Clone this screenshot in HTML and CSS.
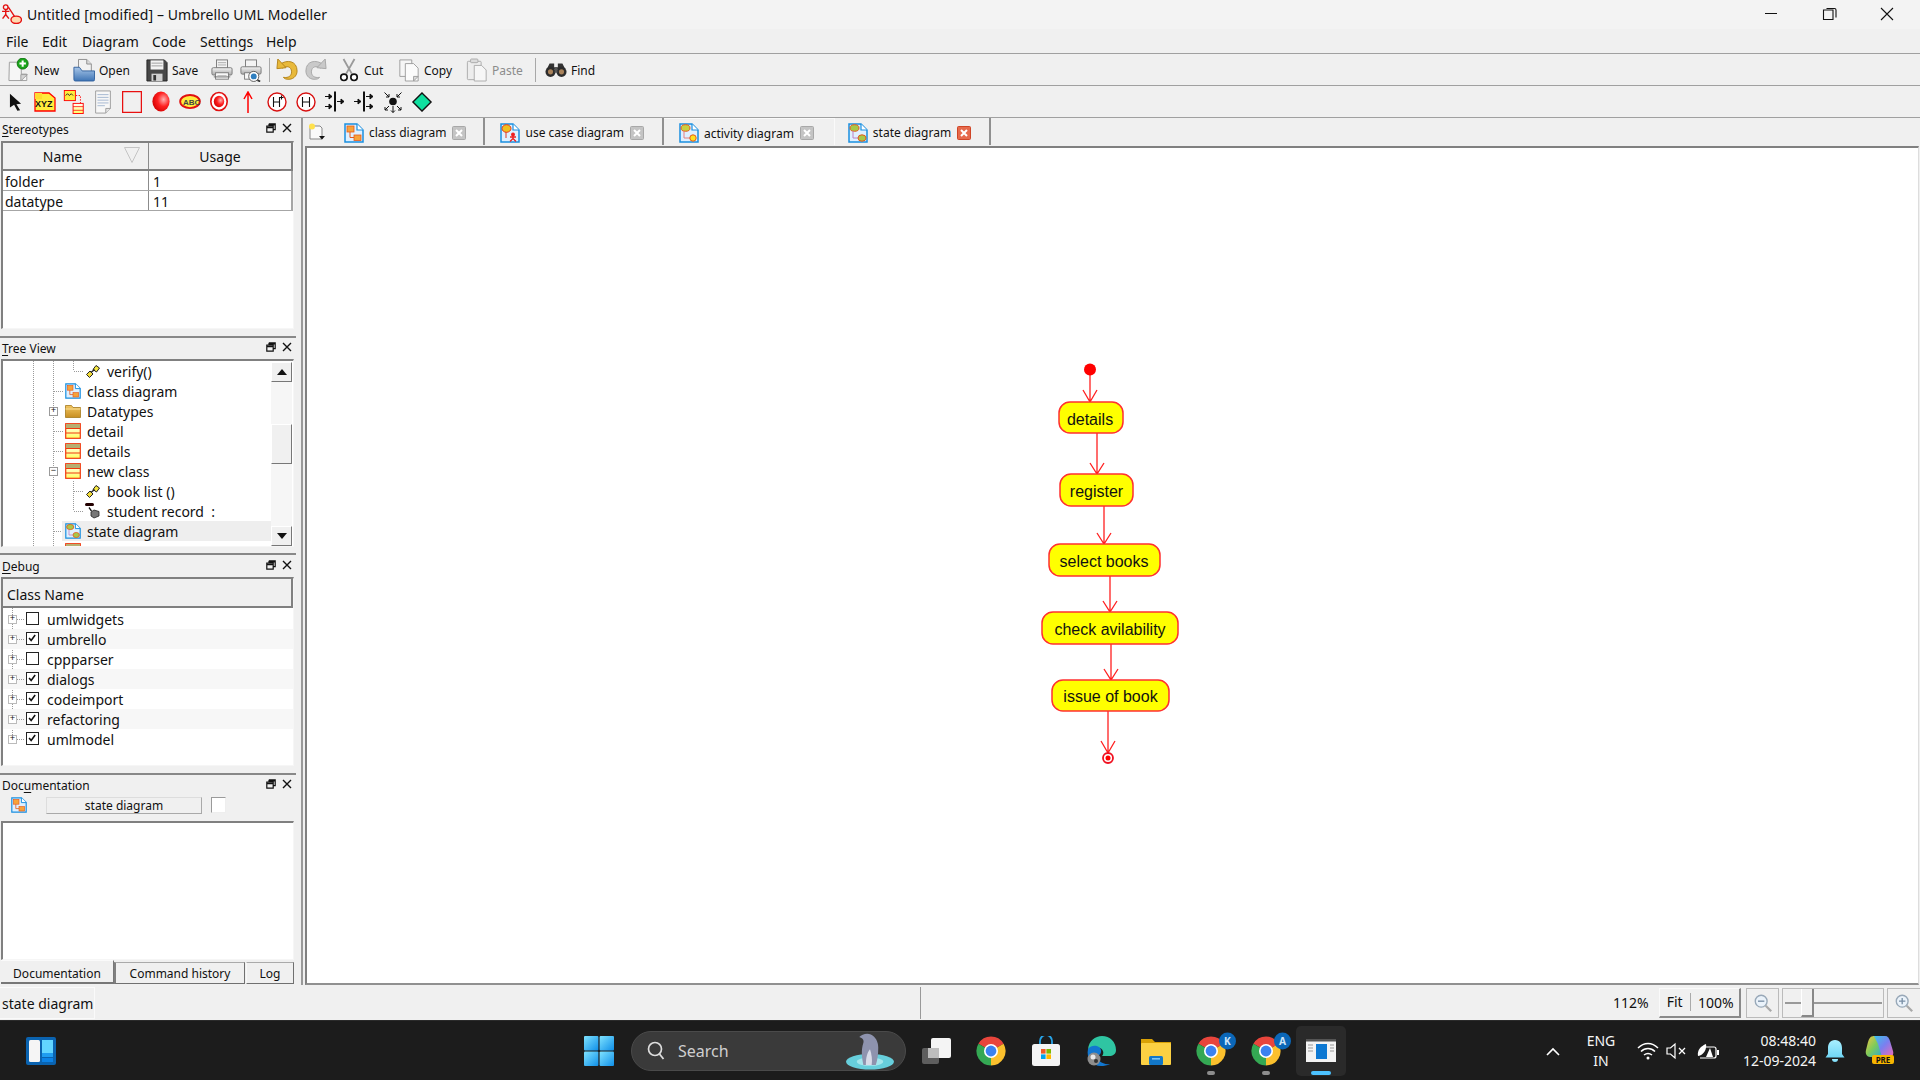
FILE: index.html
```html
<!DOCTYPE html>
<html lang="en">
<head>
<meta charset="utf-8">
<title>Untitled [modified] – Umbrello UML Modeller</title>
<link rel="stylesheet" href="styles.css">
</head>
<body>
<svg class="defs" aria-hidden="true">
  <defs>
    <linearGradient id="gFolder" x1="0" y1="0" x2="0" y2="1"><stop offset="0" stop-color="#f2c662"/><stop offset="1" stop-color="#c88f22"/></linearGradient>
    <linearGradient id="gBlue" x1="0" y1="0" x2="0" y2="1"><stop offset="0" stop-color="#a8c6e8"/><stop offset="1" stop-color="#3f75b5"/></linearGradient>
    <linearGradient id="gGrey" x1="0" y1="0" x2="0" y2="1"><stop offset="0" stop-color="#f4f4f4"/><stop offset="1" stop-color="#a9a9a9"/></linearGradient>
    <linearGradient id="gClass" x1="0" y1="0" x2="0" y2="1"><stop offset="0" stop-color="#fff"/><stop offset="1" stop-color="#ffff60"/></linearGradient>
    <radialGradient id="gRed" cx=".65" cy=".4" r=".7"><stop offset="0" stop-color="#ffb0b0"/><stop offset=".5" stop-color="#ff2020"/><stop offset="1" stop-color="#d00000"/></radialGradient>
    <linearGradient id="gBell" x1="0" y1="0" x2="0" y2="1"><stop offset="0" stop-color="#a9efff"/><stop offset="1" stop-color="#6fd6f5"/></linearGradient>
    <linearGradient id="gStart" x1="0" y1="0" x2="1" y2="1"><stop offset="0" stop-color="#7fe3ff"/><stop offset="1" stop-color="#0f8fe8"/></linearGradient>
    <linearGradient id="gCopilot" x1="0" y1="0" x2="1" y2="1"><stop offset="0" stop-color="#38c7e8"/><stop offset=".5" stop-color="#7a7ff0"/><stop offset="1" stop-color="#f06bb5"/></linearGradient>
    <linearGradient id="gCopilot2" x1="0" y1="0" x2="1" y2="1"><stop offset="0" stop-color="#f5c542"/><stop offset=".5" stop-color="#7ecb5a"/><stop offset="1" stop-color="#2aa7d8"/></linearGradient>

    <symbol id="dock-float" viewBox="0 0 10 10"><path d="M3 .8h6.2V6.600H7.400M.8 3.200h6.400V9.200H.8zM.8 4.600h6.400M3 .8v2.400M3 2h6" fill="none" stroke="#111" stroke-width="1.200"/></symbol>
    <symbol id="dock-close" viewBox="0 0 10 10"><path d="M1 1l8 8M9 1L1 9" stroke="#111" stroke-width="1.400"/></symbol>

    <symbol id="t-new" viewBox="0 0 24 26"><path d="M1.500 4.500h13v13l6 0v7h-19.500z" fill="#f6f6f6" stroke="#9a9a9a"/><path d="M14 25l7-7h-7z" fill="#d4d4d4" stroke="#9a9a9a"/><circle cx="16" cy="6" r="6" fill="#1aa51a" stroke="#0d700d"/><path d="M16 2.500v7M12.500 6h7" stroke="#fff" stroke-width="2.200"/></symbol>
    <symbol id="t-open" viewBox="0 0 24 26"><path d="M6 1.500h9l5 5v11H6z" fill="#f2f2f2" stroke="#8a8a8a"/><path d="M15 1.500v5h5" fill="#ddd" stroke="#8a8a8a"/><path d="M1 10h6l3 4h13.500v9.500a1.500 1.500 0 0 1-1.500 1.500H2.500A1.500 1.500 0 0 1 1 23.500z" fill="url(#gBlue)" stroke="#2f5f9c"/></symbol>
    <symbol id="t-save" viewBox="0 0 24 26"><path d="M1 2h19l3 3v20H1z" fill="#474747" stroke="#222"/><rect x="5" y="2.500" width="14" height="10" fill="#f3f3f3"/><path d="M6 5.500h12M6 8.500h12" stroke="#999"/><rect x="6" y="17" width="12" height="8" fill="#d0d0d0"/><rect x="8" y="18.500" width="3" height="6" fill="#333"/></symbol>
    <symbol id="t-print" viewBox="0 0 24 26"><rect x="6" y="2" width="12" height="9" fill="#f3f3f3" stroke="#777"/><path d="M7.500 5h9M7.500 7.500h9" stroke="#aaa"/><rect x="1" y="10.500" width="22" height="8" rx="1.500" fill="url(#gGrey)" stroke="#777"/><rect x="5" y="16" width="14" height="7" fill="#f8f8f8" stroke="#777"/><path d="M3 20.500h18" stroke="#666"/><path d="M7 19h10M7 21h10" stroke="#bbb"/></symbol>
    <symbol id="t-preview" viewBox="0 0 24 26"><rect x="6" y="2" width="12" height="8" fill="#f3f3f3" stroke="#777"/><rect x="1" y="9.500" width="22" height="8" rx="1.500" fill="url(#gGrey)" stroke="#777"/><rect x="5" y="16" width="12" height="7" fill="#f8f8f8" stroke="#777"/><circle cx="15" cy="20" r="5.500" fill="#fff" stroke="#555"/><circle cx="15" cy="20" r="3.200" fill="#2f7fc0"/><path d="M19 24l3 1.500" stroke="#333" stroke-width="2"/></symbol>
    <symbol id="t-undo" viewBox="0 0 24 26"><path d="M4 7c8-6 19-4 19 7 0 6-5 10-11 9-2 0-3-1-4-2 6 1 9-2 9-6 0-6-6-7-10-4z" fill="#e8b93b" stroke="#b18118" stroke-linejoin="round"/><path d="M2 1 1 11.500l10-1z" fill="#e8b93b" stroke="#b18118" stroke-linejoin="round"/></symbol>
    <symbol id="t-redo" viewBox="0 0 24 26"><path d="M20 7C12 1 1 3 1 14c0 6 5 10 11 9 2 0 3-1 4-2-6 1-9-2-9-6 0-6 6-7 10-4z" fill="#c9c9c9" stroke="#a5a5a5" stroke-linejoin="round"/><path d="M22 1l1 10.500-10-1z" fill="#c9c9c9" stroke="#a5a5a5" stroke-linejoin="round"/></symbol>
    <symbol id="t-cut" viewBox="0 0 24 26"><path d="M6 1l9 16M18 1L9 17" stroke="#9a9a9a" stroke-width="2" fill="none"/><circle cx="6.500" cy="21" r="3.500" fill="#fff" stroke="#111" stroke-width="1.800"/><circle cx="17.500" cy="21" r="3.500" fill="#fff" stroke="#111" stroke-width="1.800"/></symbol>
    <symbol id="t-copy" viewBox="0 0 24 26"><path d="M2 2h13v18H2z" fill="#f6f6f6" stroke="#9a9a9a"/><path d="M8 6h9l5 5v14H8z" fill="#fbfbfb" stroke="#9a9a9a"/><path d="M17 25l5-5h-5z" fill="#ddd" stroke="#9a9a9a"/></symbol>
    <symbol id="t-paste" viewBox="0 0 24 26"><rect x="1.500" y="3.500" width="15" height="20" rx="1" fill="#ededed" stroke="#a8a8a8"/><rect x="5" y="1" width="8" height="4" rx="1" fill="#dcdcdc" stroke="#a8a8a8"/><path d="M9 8h8l5 5v12H9z" fill="#f6f6f6" stroke="#a8a8a8"/></symbol>
    <symbol id="t-find" viewBox="0 0 24 22"><path d="M2 10l3-6h5v4h4V4h5l3 6z" fill="#333"/><circle cx="6" cy="13" r="5.500" fill="#2c2c2c"/><circle cx="18" cy="13" r="5.500" fill="#2c2c2c"/><circle cx="6" cy="13" r="2.800" fill="#a9825a"/><circle cx="18" cy="13" r="2.800" fill="#a9825a"/><rect x="10.500" y="8" width="3" height="6" fill="#555"/></symbol>

    <symbol id="u-cursor" viewBox="0 0 14 20"><path d="M1 1l12 11-5 .5 4 6.500-3 .5-3.500-6.500L1 16z" fill="#111"/></symbol>
    <symbol id="u-xyz" viewBox="0 0 22 20"><path d="M1 1h14l6 5v13H1z" fill="#ffec3d" stroke="#f00" stroke-width="1.300"/><path d="M1 1h7v6h-7z" fill="#ffdc30"/></symbol>
    <symbol id="u-assoc" viewBox="0 0 22 26"><rect x=".5" y=".5" width="12" height="11" fill="#ffec3d" stroke="#f00"/><rect x="10" y="14.500" width="11" height="11" fill="url(#gClass)" stroke="#f00"/><path d="M10 18h11M10 22h11" stroke="#f00" stroke-width=".8"/><path d="M13 6h5v8" fill="none" stroke="#f00" stroke-dasharray="1.500 1.500"/><path d="M2 6l2-2 2 2 2-2 2 2" fill="none" stroke="#222"/></symbol>
    <symbol id="u-note" viewBox="0 0 18 26"><path d="M1 1h16v19l-5 5H1z" fill="#f7f7f7" stroke="#9b9b9b"/><path d="M12 25v-5h5" fill="#e3e3e3" stroke="#9b9b9b"/><path d="M3 5h12M3 8h12M3 11h12M3 14h12M3 17h8" stroke="#8da6c6" stroke-width=".8"/></symbol>
    <symbol id="u-rect" viewBox="0 0 20 22"><rect x=".6" y=".6" width="18.800" height="20.800" fill="none" stroke="#e81010" stroke-width="1.300"/></symbol>
    <symbol id="u-initial" viewBox="0 0 18 22"><ellipse cx="9" cy="11" rx="9" ry="10.500" fill="url(#gRed)"/></symbol>
    <symbol id="u-abc" viewBox="0 0 22 16"><ellipse cx="11" cy="8" rx="10.500" ry="7" fill="#ffec3d" stroke="#e01010" stroke-width="2"/></symbol>
    <symbol id="u-final" viewBox="0 0 18 20"><ellipse cx="9" cy="10" rx="8.200" ry="9" fill="#fff" stroke="#e01010" stroke-width="1.600"/><ellipse cx="9" cy="10" rx="5.200" ry="5.800" fill="url(#gRed)"/></symbol>
    <symbol id="u-arrow" viewBox="0 0 10 22"><path d="M5 22V2M1 8l4-7 4 7" fill="none" stroke="#f00" stroke-width="1.500"/></symbol>
    <symbol id="u-hstar" viewBox="0 0 20 20"><ellipse cx="10" cy="10" rx="9" ry="9" fill="#fff" stroke="#d81010" stroke-width="1.400"/><path d="M6.500 5v10M12.500 5v10M6.500 10h6M14.500 3.500v4M12.500 5.500h4" stroke="#111" stroke-width="1.100" fill="none"/></symbol>
    <symbol id="u-h" viewBox="0 0 20 20"><ellipse cx="10" cy="10" rx="9" ry="9" fill="#fff" stroke="#d81010" stroke-width="1.400"/><path d="M6.500 5v10M13.500 5v10M6.500 10h7" stroke="#111" stroke-width="1.100" fill="none"/></symbol>
    <symbol id="u-fork" viewBox="0 0 22 20"><rect x="10" y="0" width="2" height="20" fill="#111"/><path d="M1 5h7M5 2.500 8 5 5 7.500zM1 15h7M5 12.500 8 15 5 17.500zM13 10h7M17 7.500 20 10l-3 2.500z" stroke="#111" fill="#111"/></symbol>
    <symbol id="u-join" viewBox="0 0 22 20"><rect x="10" y="0" width="2" height="20" fill="#111"/><path d="M1 10h7M5 7.500 8 10l-3 2.500zM13 5h7M17 2.500 20 5l-3 2.500zM13 15h7M17 12.500 20 15l-3 2.500z" stroke="#111" fill="#111"/></symbol>
    <symbol id="u-burst" viewBox="0 0 20 22"><circle cx="10" cy="10.500" r="3.800" fill="#111"/><path d="M1.500 1.500 6 6M6 3v3H3M18.500 1.500 14 6M14 3v3h3M6 15l-4 4M2 16v3h3M14 15l4 4M18 16v3h-3M10 15v6.500M8 19.500l2 2 2-2" fill="none" stroke="#111"/></symbol>
    <symbol id="u-diamond" viewBox="0 0 22 22"><path d="M11 1l10 10-10 10L1 11z" fill="#10e0a0" stroke="#111" stroke-width="1.500"/></symbol>

    <symbol id="d-base" viewBox="0 0 20 20"><path d="M1 1h12l6 6v12H1z" fill="#dff0ff" stroke="#1a8fe0" stroke-width="1.500"/><path d="M13 1v6h6" fill="#fff" stroke="#1a8fe0" stroke-width="1.200"/></symbol>
    <symbol id="d-class" viewBox="0 0 20 20"><use href="#d-base"/><rect x="3" y="3" width="7" height="6" fill="#f6a33a" stroke="#e5591d" stroke-width=".8"/><rect x="10" y="12" width="7" height="5.500" fill="#f6a33a" stroke="#e5591d" stroke-width=".8"/><path d="M6 9v5.500h4" fill="none" stroke="#e5591d"/></symbol>
    <symbol id="d-usecase" viewBox="0 0 20 20"><use href="#d-base"/><ellipse cx="6.500" cy="5.500" rx="4.500" ry="3.800" fill="#f0c020" stroke="#e5391d"/><path d="M6 9v6" stroke="#e5391d"/><circle cx="13" cy="11.500" r="2" fill="#ee2020"/><path d="M13 13v3M10 14h6M13 15.500l-3 3M13 15.500l3 3" stroke="#ee2020" stroke-width="1.300"/></symbol>
    <symbol id="d-activity" viewBox="0 0 20 20"><use href="#d-base"/><ellipse cx="6.500" cy="5" rx="4.500" ry="3.300" fill="#c9d040" stroke="#e5591d"/><path d="M5 8v7h6" fill="none" stroke="#e58080"/><circle cx="14" cy="15" r="3.200" fill="#ffe020" stroke="#e5591d"/></symbol>
    <symbol id="d-state" viewBox="0 0 20 20"><use href="#d-base"/><ellipse cx="6.500" cy="5" rx="4.500" ry="3.300" fill="#a8c848" stroke="#e5591d"/><path d="M5 8v7h5" fill="none" stroke="#c080c0"/><ellipse cx="14" cy="15" rx="4" ry="3.200" fill="#a8c848" stroke="#e5591d"/></symbol>
    <symbol id="x-btn" viewBox="0 0 14 14"><rect x=".5" y=".5" width="13" height="13" rx="1" fill="#c4c4c4" stroke="#a8a8a8"/><path d="M4 4l6 6M10 4l-6 6" stroke="#fff" stroke-width="2"/></symbol>
    <symbol id="x-btn-on" viewBox="0 0 14 14"><rect x=".5" y=".5" width="13" height="13" rx="1" fill="#e66a4c" stroke="#cf4526"/><path d="M4 4l6 6M10 4l-6 6" stroke="#fff" stroke-width="2"/></symbol>
    <symbol id="new-tab" viewBox="0 0 18 18"><path d="M2 3h10l2 2v11H2z" fill="#fafafa" stroke="#888"/><circle cx="4" cy="3.500" r="3" fill="#ffe14d"/><path d="M11 13h6l-3 3.500z" fill="#111"/></symbol>

    <symbol id="n-key" viewBox="0 0 16 16"><path d="M4.500 14.500 1.500 11.500 5 8l3 3z" fill="#f2dc3a" stroke="#222"/><path d="M8 6.500 11 2.500l3.500 2.500-3 4z" fill="#f7e83f" stroke="#222"/><path d="M6 9.500l3.500-3" stroke="#222" stroke-width="1.500"/></symbol>
    <symbol id="n-folder" viewBox="0 0 16 16"><path d="M.5 2.500h6l1.500 2h7.500v10H.5z" fill="url(#gFolder)" stroke="#a57a1d" stroke-width=".8"/><path d="M.5 6h15" stroke="#f9e09a"/></symbol>
    <symbol id="n-class" viewBox="0 0 16 16"><rect x=".7" y=".7" width="14.600" height="14.600" fill="url(#gClass)" stroke="#f03a10" stroke-width="1.200"/><rect x="1" y="1" width="14" height="4.500" fill="#b8ae70"/><path d="M1 5.500h14M1 10h14" stroke="#f03a10"/></symbol>
    <symbol id="n-attr" viewBox="0 0 16 16"><rect x="0" y="0" width="9" height="3" rx="1.500" fill="#200"/><path d="M4 4.500l2.500 3.500" stroke="#111" stroke-width="1.300"/><path d="M9 7l5 1.500v4.500l-5 2-3-2V9z" fill="#777" stroke="#222" stroke-width=".8"/></symbol>
    <symbol id="check" viewBox="0 0 12 12"><path d="M2.500 6 5 9l4.800-6.500" fill="none" stroke="#111" stroke-width="1.900"/></symbol>
    <symbol id="zoom-out" viewBox="0 0 22 22"><circle cx="9" cy="9" r="6.500" fill="#eaf2fa" stroke="#98a8b8" stroke-width="1.500"/><path d="M5.500 9h7" stroke="#7a8fa5" stroke-width="1.500"/><path d="M14 14l6 6" stroke="#a9a9a9" stroke-width="2.500"/></symbol>
    <symbol id="zoom-in" viewBox="0 0 22 22"><circle cx="9" cy="9" r="6.500" fill="#eaf2fa" stroke="#98a8b8" stroke-width="1.500"/><path d="M5.500 9h7M9 5.500v7" stroke="#7a8fa5" stroke-width="1.500"/><path d="M14 14l6 6" stroke="#a9a9a9" stroke-width="2.500"/></symbol>

    <symbol id="chrome" viewBox="0 0 30 30"><path d="M15 15 2.440 7.750A14.500 14.500 0 0 1 27.560 7.750z" fill="#e8453c"/><path d="M15 15 27.560 7.750A14.500 14.500 0 0 1 15 29.500z" fill="#fbc02d"/><path d="M15 15V29.500A14.500 14.500 0 0 1 2.440 7.750z" fill="#34a853"/><circle cx="15" cy="15" r="7" fill="#fff"/><circle cx="15" cy="15" r="5.400" fill="#3b82f0"/></symbol>
  </defs>
</svg>

<div class="window">
  <header class="titlebar">
    <svg class="app-logo" viewBox="0 0 20 20"><circle cx="4.500" cy="3" r="2.200" fill="none" stroke="#e41010" stroke-width="1.300"/><path d="M4.500 5v5M1 7h7M4.500 10l-3 4M4.500 10l3 4M7 3l6 9" stroke="#e41010" stroke-width="1.300" fill="none"/><ellipse cx="14.500" cy="15" rx="5" ry="3.500" fill="#ffd9b0" stroke="#e41010" stroke-width="1.300"/></svg>
    <span class="title-text">Untitled [modified] – Umbrello UML Modeller</span>
    <div class="win-controls">
      <svg class="win-btn" viewBox="0 0 58 24"><path d="M23 11h12" stroke="#111"/></svg>
      <svg class="win-btn" viewBox="0 0 58 24"><path d="M24.500 7.500h8.500v9.500h-9.500V7.500zM26.500 6h8q1.500 0 1.500 1.500V15" fill="none" stroke="#111" stroke-width="1.100"/></svg>
      <svg class="win-btn" viewBox="0 0 58 24"><path d="M23 5.500l12 12M35 5.500 23 17.500" stroke="#111" stroke-width="1.100"/></svg>
    </div>
  </header>

  <nav class="menubar">
    <span class="menu-item">File</span><span class="menu-item">Edit</span><span class="menu-item">Diagram</span><span class="menu-item">Code</span><span class="menu-item">Settings</span><span class="menu-item">Help</span>
  </nav>

  <div class="toolbar">
    <div class="tool w-new"><svg class="tool-icon"><use href="#t-new"/></svg><span>New</span></div>
    <div class="tool w-open"><svg class="tool-icon"><use href="#t-open"/></svg><span>Open</span></div>
    <div class="tool w-save"><svg class="tool-icon"><use href="#t-save"/></svg><span>Save</span></div>
    <div class="tool w-ico"><svg class="tool-icon"><use href="#t-print"/></svg></div>
    <div class="tool w-ico"><svg class="tool-icon"><use href="#t-preview"/></svg></div>
    <div class="tool-sep"></div>
    <div class="tool w-ico"><svg class="tool-icon"><use href="#t-undo"/></svg></div>
    <div class="tool w-redo"><svg class="tool-icon"><use href="#t-redo"/></svg></div>
    <div class="tool w-cut"><svg class="tool-icon"><use href="#t-cut"/></svg><span>Cut</span></div>
    <div class="tool w-copy"><svg class="tool-icon"><use href="#t-copy"/></svg><span>Copy</span></div>
    <div class="tool w-paste"><svg class="tool-icon"><use href="#t-paste"/></svg><span class="disabled">Paste</span></div>
    <div class="tool-sep sep-b"></div>
    <div class="tool"><svg class="tool-icon"><use href="#t-find"/></svg><span>Find</span></div>
  </div>

  <div class="toolbar uml">
    <div class="uml-tool"><svg class="u-14"><use href="#u-cursor"/></svg></div>
    <div class="uml-tool"><svg class="u-22"><use href="#u-xyz"/></svg><span class="xyz">XYZ</span></div>
    <div class="uml-tool"><svg class="u-22 u-tall"><use href="#u-assoc"/></svg></div>
    <div class="uml-tool"><svg class="u-18"><use href="#u-note"/></svg></div>
    <div class="uml-tool"><svg class="u-20"><use href="#u-rect"/></svg></div>
    <div class="uml-tool"><svg class="u-18 u-mid"><use href="#u-initial"/></svg></div>
    <div class="uml-tool"><svg class="u-22 u-flat"><use href="#u-abc"/></svg><span class="abc">ABC</span></div>
    <div class="uml-tool"><svg class="u-18 u-mid"><use href="#u-final"/></svg></div>
    <div class="uml-tool"><svg class="u-10"><use href="#u-arrow"/></svg></div>
    <div class="uml-tool"><svg class="u-20"><use href="#u-hstar"/></svg></div>
    <div class="uml-tool"><svg class="u-20"><use href="#u-h"/></svg></div>
    <div class="uml-tool"><svg class="u-22 u-mid"><use href="#u-fork"/></svg></div>
    <div class="uml-tool"><svg class="u-22 u-mid"><use href="#u-join"/></svg></div>
    <div class="uml-tool"><svg class="u-20"><use href="#u-burst"/></svg></div>
    <div class="uml-tool"><svg class="u-22"><use href="#u-diamond"/></svg></div>
  </div>

  <main class="workspace">
    <aside class="docks">
      <section class="dock dock-stereo">
        <div class="dock-title"><span><u>S</u>tereotypes</span><svg class="dock-ctl"><use href="#dock-float"/></svg><svg class="dock-ctl"><use href="#dock-close"/></svg></div>
        <div class="dock-body">
          <div class="grid-head"><div class="head-cell name-col">Name<svg class="sort-mark" viewBox="0 0 16 16"><path d="M.5 .5h15L8 15.500z" fill="none" stroke="#c4c4c4"/></svg></div><div class="head-cell usage-col">Usage</div></div>
          <div class="grid-row"><div class="cell name-col">folder</div><div class="cell usage-col">1</div></div>
          <div class="grid-row"><div class="cell name-col">datatype</div><div class="cell usage-col">11</div></div>
        </div>
      </section>

      <section class="dock dock-tree">
        <div class="dock-title tree-title"><span><u>T</u>ree View</span><svg class="dock-ctl"><use href="#dock-float"/></svg><svg class="dock-ctl"><use href="#dock-close"/></svg></div>
        <div class="dock-body tree-body">
          <div class="tree">
            <div class="tree-row lvl3 branch-end"><svg class="node-icon"><use href="#n-key"/></svg><span>verify()</span></div>
            <div class="tree-row lvl2 stub"><svg class="node-icon"><use href="#d-class"/></svg><span>class diagram</span></div>
            <div class="tree-row lvl2x"><span class="expander">+</span><svg class="node-icon"><use href="#n-folder"/></svg><span>Datatypes</span></div>
            <div class="tree-row lvl2 stub"><svg class="node-icon"><use href="#n-class"/></svg><span>detail</span></div>
            <div class="tree-row lvl2 stub"><svg class="node-icon"><use href="#n-class"/></svg><span>details</span></div>
            <div class="tree-row lvl2x"><span class="expander">−</span><svg class="node-icon"><use href="#n-class"/></svg><span>new class</span></div>
            <div class="tree-row lvl3 branch"><svg class="node-icon"><use href="#n-key"/></svg><span>book list ()</span></div>
            <div class="tree-row lvl3 branch-end"><svg class="node-icon"><use href="#n-attr"/></svg><span>student record&nbsp; :</span></div>
            <div class="tree-row lvl2 selected"><svg class="node-icon"><use href="#d-state"/></svg><span>state diagram</span></div>
            <div class="tree-row lvl2 stub"><svg class="node-icon"><use href="#n-class"/></svg></div>
          </div>
          <div class="scrollbar">
            <div class="sb-btn"><svg viewBox="0 0 10 6" class="sb-arrow"><path d="M5 0l5 6H0z" fill="#111"/></svg></div>
            <div class="sb-track"><div class="sb-thumb"></div></div>
            <div class="sb-btn"><svg viewBox="0 0 10 6" class="sb-arrow"><path d="M5 6 0 0h10z" fill="#111"/></svg></div>
          </div>
        </div>
      </section>

      <section class="dock dock-debug">
        <div class="dock-title debug-title"><span><u>D</u>ebug</span><svg class="dock-ctl"><use href="#dock-float"/></svg><svg class="dock-ctl"><use href="#dock-close"/></svg></div>
        <div class="dock-body">
          <div class="debug-head">Class Name</div>
          <div class="debug-list">
            <div class="debug-row"><span class="expander">+</span><span class="checkbox"></span><span>umlwidgets</span></div>
            <div class="debug-row alt"><span class="expander">+</span><span class="checkbox"><svg><use href="#check"/></svg></span><span>umbrello</span></div>
            <div class="debug-row"><span class="expander">+</span><span class="checkbox"></span><span>cppparser</span></div>
            <div class="debug-row alt"><span class="expander">+</span><span class="checkbox"><svg><use href="#check"/></svg></span><span>dialogs</span></div>
            <div class="debug-row"><span class="expander">+</span><span class="checkbox"><svg><use href="#check"/></svg></span><span>codeimport</span></div>
            <div class="debug-row alt"><span class="expander">+</span><span class="checkbox"><svg><use href="#check"/></svg></span><span>refactoring</span></div>
            <div class="debug-row"><span class="expander">+</span><span class="checkbox"><svg><use href="#check"/></svg></span><span>umlmodel</span></div>
          </div>
        </div>
      </section>

      <section class="dock dock-doc">
        <div class="dock-title doc-title"><span>Doc<u>u</u>mentation</span><svg class="dock-ctl"><use href="#dock-float"/></svg><svg class="dock-ctl"><use href="#dock-close"/></svg></div>
        <div class="doc-head"><svg class="doc-icon"><use href="#d-class"/></svg><div class="doc-name">state diagram</div><div class="doc-check"></div></div>
        <div class="doc-text"></div>
        <div class="doc-tabs"><div class="doc-tab active">Documentation</div><div class="doc-tab w-hist">Command history</div><div class="doc-tab w-log">Log</div></div>
      </section>
    </aside>

    <section class="editor">
      <div class="tabs">
        <svg class="new-tab"><use href="#new-tab"/></svg>
        <div class="tab tab-first"><svg class="tab-icon"><use href="#d-class"/></svg><span>class diagram</span><svg class="tab-x"><use href="#x-btn"/></svg></div>
        <div class="tab"><svg class="tab-icon"><use href="#d-usecase"/></svg><span>use case diagram</span><svg class="tab-x"><use href="#x-btn"/></svg></div>
        <div class="tab tab-before-active"><svg class="tab-icon"><use href="#d-activity"/></svg><span>activity diagram</span><svg class="tab-x"><use href="#x-btn"/></svg></div>
        <div class="tab tab-active"><svg class="tab-icon"><use href="#d-state"/></svg><span>state diagram</span><svg class="tab-x"><use href="#x-btn-on"/></svg></div>
      </div>
      <div class="canvas">
        <svg class="diagram" viewBox="307 148 1610 835">
          <g class="edges">
            <path d="M1090 369V402M1083 390l7 12 7-12"/>
            <path d="M1097 433V474M1090 463l7 11 7-11"/>
            <path d="M1104 506V544M1097 533l7 11 7-11"/>
            <path d="M1110 576V612M1103 601l7 11 7-11"/>
            <path d="M1111 644V680M1104 669l7 11 7-11"/>
            <path d="M1108 711V753M1101 741l7 12 7-12"/>
          </g>
          <circle class="start" cx="1090" cy="369.500" r="6"/>
          <g class="states">
            <rect x="1059" y="402" width="64" height="31" rx="11"/>
            <rect x="1060" y="474" width="73" height="32" rx="11"/>
            <rect x="1049" y="544" width="111" height="32" rx="11"/>
            <rect x="1042" y="612" width="136" height="32" rx="11"/>
            <rect x="1052" y="680" width="117" height="31" rx="11"/>
          </g>
          <g class="labels">
            <text x="1090" y="424.500">details</text>
            <text x="1096.500" y="497">register</text>
            <text x="1104" y="566.500">select books</text>
            <text x="1110" y="635">check avilability</text>
            <text x="1110.500" y="702">issue of book</text>
          </g>
          <circle class="end-ring" cx="1108" cy="758" r="5"/>
          <circle class="start" cx="1108" cy="758" r="2.500"/>
        </svg>
      </div>
    </section>
  </main>

  <div class="statusbar">
    <div class="status-label">state diagram</div>
    <div class="status-right">
      <span class="zoom-pct">112%</span>
      <div class="zoom-btns"><span class="zb-fit">Fit</span><span class="zb-100">100%</span></div>
      <div class="zoom-box"><svg class="zoom-glass"><use href="#zoom-out"/></svg></div>
      <div class="zoom-slider"><div class="slider-handle"></div></div>
      <div class="zoom-box zoom-last"><svg class="zoom-glass"><use href="#zoom-in"/></svg></div>
    </div>
  </div>

  <footer class="taskbar">
    <svg class="widgets" viewBox="0 0 30 28"><rect width="30" height="28" rx="2" fill="#0a63b0"/><rect x="3" y="3" width="11" height="22" rx="1.500" fill="#f5f5f5"/><rect x="16" y="3" width="11" height="13" fill="#62d5ff"/><rect x="16" y="16" width="11" height="4" fill="#1f9cf0"/><rect x="16" y="21" width="11" height="4" fill="#0b82e6"/></svg>
    <svg class="start-btn" viewBox="0 0 30 30"><rect width="14.400" height="14.400" rx="1" fill="url(#gStart)"/><rect x="15.600" width="14.400" height="14.400" rx="1" fill="url(#gStart)"/><rect y="15.600" width="14.400" height="14.400" rx="1" fill="url(#gStart)"/><rect x="15.600" y="15.600" width="14.400" height="14.400" rx="1" fill="url(#gStart)"/></svg>
    <div class="search-pill">
      <svg class="search-glass" viewBox="0 0 18 20"><circle cx="8" cy="8" r="6.500" fill="none" stroke="#ddd" stroke-width="1.700"/><path d="M12.500 13l4 5" stroke="#ddd" stroke-width="1.800"/></svg>
      <span class="search-text">Search</span>
      <svg class="dolphin" viewBox="0 0 60 46"><ellipse cx="30" cy="36" rx="29" ry="9.500" fill="#67cfdc"/><ellipse cx="30" cy="36" rx="16" ry="5" fill="#a4e6ec"/><path d="M22 40c-2-10-3-18 0-27 1-3-1-6-5-7 3-3 9-5 14-3 6 3 9 9 9 16 0 8-1 15-3 21z" fill="#8e93ae"/><path d="M25 40c0-8 1-14 5-19 2 6 3 13 2 19z" fill="#d8dbe8"/></svg>
    </div>
    <div class="task-slot first-slot">
      <svg class="task-view" viewBox="0 0 31 28"><rect x="1" y="11" width="17" height="16" rx="2" fill="#5e5e5e"/><rect x="10" y="1" width="20" height="20" rx="2" fill="#f4f4f4"/><rect x="7" y="11" width="11" height="10" fill="#bdbdbd"/></svg>
    </div>
    <div class="task-slot"><svg class="task-icon"><use href="#chrome"/></svg></div>
    <div class="task-slot">
      <svg class="task-icon" viewBox="0 0 30 30"><path d="M9 8V5a6 6 0 0 1 12 0v3" fill="none" stroke="#27a4e8" stroke-width="1.800"/><rect x="1" y="8" width="28" height="22" rx="2.500" fill="#f4f4f4"/><rect x="10" y="13" width="4.600" height="4.600" fill="#f05a28"/><rect x="15.400" y="13" width="4.600" height="4.600" fill="#7fba00"/><rect x="10" y="18.400" width="4.600" height="4.600" fill="#00a4ef"/><rect x="15.400" y="18.400" width="4.600" height="4.600" fill="#ffb900"/></svg>
    </div>
    <div class="task-slot">
      <svg class="task-icon" viewBox="0 0 30 30"><path d="M2 13C3 5 9 0 16 0c8 0 14 6 14 14 0 4-3 6-7 6h-7c2-2 2-6-2-8-5-2-10 0-12 1z" fill="#2fc5a2"/><path d="M2 13c3-4 8-4 11-2 3 2 3 7-1 9-1 4 4 9 12 8-3 1.500-6 2-9 2C6 30 0 22 2 13z" fill="#1277d0"/><circle cx="8" cy="23" r="6.500" fill="#8d8d8d"/><circle cx="7" cy="21" r="2.500" fill="#e8e8e8"/><circle cx="10" cy="25" r="2" fill="#333"/></svg>
    </div>
    <div class="task-slot">
      <svg class="task-icon" viewBox="0 0 30 30"><path d="M0 3h11l3 3h16v5H0z" fill="#d9a106"/><rect y="7" width="30" height="22" rx="1" fill="#fbd043"/><rect x="8" y="20" width="14" height="9" rx="1.500" fill="#1277c8"/><rect x="11" y="22" width="8" height="1.600" fill="#7cc4f2"/></svg>
    </div>
    <div class="task-slot running">
      <svg class="task-icon"><use href="#chrome"/></svg>
      <svg class="badge" viewBox="0 0 20 20"><circle cx="10" cy="10" r="10" fill="#0b67b8"/><text x="10" y="14.500" class="badge-text">K</text></svg>
      <i class="dot"></i>
    </div>
    <div class="task-slot running">
      <svg class="task-icon"><use href="#chrome"/></svg>
      <svg class="badge" viewBox="0 0 20 20"><circle cx="10" cy="10" r="10" fill="#0b67b8"/><text x="10" y="14.500" class="badge-text">A</text></svg>
      <i class="dot"></i>
    </div>
    <div class="task-slot active-app">
      <svg class="app-win" viewBox="0 0 30 23"><rect width="30" height="23" fill="#f3f3f3"/><rect width="30" height="2.500" fill="#555"/><rect x="10" y="5" width="11" height="15" fill="#0d78d2"/><path d="M2 6h5M2 9h5M2 12h5M24 6h4M24 9h4M24 12h4" stroke="#999"/></svg>
      <i class="bar"></i>
    </div>

    <div class="tray">
      <svg class="tray-slot chev" viewBox="0 0 26 12"><path d="M7 10l6-6 6 6" fill="none" stroke="#fff" stroke-width="1.600"/></svg>
      <div class="tray-lang"><span>ENG</span><span>IN</span></div>
      <svg class="tray-slot wifi" viewBox="0 0 24 20"><path d="M2 7c6-6 14-6 20 0M5 10.500c4-4 10-4 14 0M8 14c2.500-2 5.500-2 8 0" fill="none" stroke="#fff" stroke-width="1.500"/><circle cx="12" cy="17" r="1.500" fill="#fff"/></svg>
      <svg class="tray-slot vol" viewBox="0 0 34 20"><path d="M7 7h3.500L15 3v14l-4.500-4H7z" fill="none" stroke="#fff" stroke-width="1.200"/><path d="M19 7l6 6M25 7l-6 6" stroke="#fff" stroke-width="1.300"/></svg>
      <svg class="tray-slot batt" viewBox="0 0 28 20"><path d="M9 6h11a2 2 0 0 1 2 2v7a2 2 0 0 1-2 2H6" fill="none" stroke="#fff" stroke-width="1.200"/><rect x="23" y="9" width="2" height="5" fill="#fff"/><path d="M4 15C3 9 7 5 12 3c1 5-2 11-8 12zM12 16l4-9 3 9z" fill="#fff"/></svg>
      <div class="clock"><span>08:48:40</span><span>12-09-2024</span></div>
      <svg class="tray-slot bell" viewBox="0 0 38 24"><path d="M19 1c5 0 7 4 7 8v6l2.500 3.500h-19L12 15V9c0-4 2-8 7-8z" fill="url(#gBell)"/><path d="M16 20h6a3 3 0 0 1-6 0z" fill="url(#gBell)"/></svg>
      <div class="copilot">
        <svg class="copilot-mark" viewBox="0 0 29 24"><path d="M8 1h12c3 0 4 2 5 5l3 10c1 4-1 6-4 6H17z" fill="url(#gCopilot)"/><path d="M9 1C5 1 4 4 3 7L1 15c-1 4 1 7 4 7h12l-4-13z" fill="url(#gCopilot2)"/></svg>
        <span class="pre-badge">PRE</span>
      </div>
    </div>
  </footer>
</div>
</body>
</html>
```
FILE: styles.css
```css
* { box-sizing: border-box; }
html, body { margin: 0; padding: 0; height: 100%; }
body { font-family: "Noto Sans", "Open Sans", sans-serif; color: #111; background: #f0f0f0; overflow: hidden; }
u { text-underline-offset: 2px; }
.defs { width: 0; height: 0; display: block; overflow: hidden; }
.window { width: 1920px; height: 1080px; display: flex; flex-direction: column; }

.titlebar { height: 29px; background: #f3f3f3; display: flex; align-items: center; padding-left: 1px; flex: none; }
.app-logo { width: 21px; height: 21px; flex: none; }
.title-text { margin-left: 5px; font-size: 14px; letter-spacing: .1px; }
.win-controls { margin-left: auto; display: flex; padding-right: 4px; }
.win-btn { width: 58px; height: 29px; }

.menubar { height: 25px; flex: none; display: flex; align-items: center; border-bottom: 1px solid #a0a0a0; background: #f0f0f0; padding: 0 0 0 6px; font-size: 14px; }
.menu-item:nth-child(1) { width: 36px; }
.menu-item:nth-child(2) { width: 40px; }
.menu-item:nth-child(3) { width: 70px; }
.menu-item:nth-child(4) { width: 48px; }
.menu-item:nth-child(5) { width: 66px; }

.toolbar { height: 32px; flex: none; display: flex; align-items: center; border-bottom: 1px solid #a0a0a0; padding-left: 8px; font-size: 12px; }
.tool { display: flex; align-items: center; gap: 4px; }
.tool span { padding-top: 1px; }
.tool-icon { width: 22px; height: 24px; flex: none; }
.w-new { width: 65px; }
.w-open { width: 73px; }
.w-save { width: 65px; }
.w-ico { width: 29px; }
.w-redo { width: 33px; }
.w-cut { width: 60px; }
.w-copy { width: 68px; }
.w-paste { width: 69px; }
.tool-sep { width: 1px; height: 24px; background: #a8a8a8; margin-right: 6px; }
.sep-b { margin-right: 9px; }
.disabled { color: #8c8c8c; }

.uml { padding-left: 1px; position: relative; }
.uml-tool { width: 29px; height: 24px; display: flex; align-items: center; justify-content: center; position: relative; }
.u-10 { width: 10px; height: 22px; }
.u-14 { width: 13px; height: 20px; }
.u-18 { width: 18px; height: 24px; }
.u-20 { width: 20px; height: 22px; }
.u-22 { width: 22px; height: 20px; }
.u-tall { height: 24px; }
.u-flat { height: 15px; }
.u-mid { height: 21px; }
.xyz { position: absolute; left: 5px; top: 9px; font: bold 9px "Liberation Sans", sans-serif; color: #111; }
.abc { position: absolute; left: 8px; top: 8px; font: bold 8px "Liberation Sans", sans-serif; color: #444; }

.workspace { height: 867px; flex: none; display: flex; }
.docks { width: 296px; flex: none; display: flex; flex-direction: column; }
.dock { flex: none; display: flex; flex-direction: column; }
.dock-stereo { height: 218px; padding-bottom: 7px; }
.dock-tree { height: 217px; border-top: 2px solid #888; padding-bottom: 6px; }
.dock-debug { height: 220px; border-top: 2px solid #888; padding-bottom: 7px; }
.dock-doc { height: 212px; border-top: 2px solid #888; }
.dock-title { height: 23px; flex: none; display: flex; align-items: center; font-size: 12px; padding: 0 4px 0 2px; }
.dock-title span { margin-right: auto; }
.tree-title { height: 21px; }
.debug-title { height: 22px; }
.doc-title { height: 21px; }
.dock-ctl { width: 10px; height: 10px; margin-left: 6px; margin-bottom: 3px; }
.dock-body { flex: 1; margin: 0 2px 0 1px; background: #fff; border-left: 2px solid #808080; border-top: 2px solid #808080; border-right: 1px solid #f6f6f6; border-bottom: 1px solid #f6f6f6; font-size: 14px; min-height: 0; }

.grid-head { display: flex; height: 28px; background: #f0f0f0; border-bottom: 2px solid #808080; border-right: 2px solid #808080; }
.head-cell { display: flex; align-items: center; justify-content: center; position: relative; font-size: 14px; }
.head-cell.name-col { padding-right: 26px; }
.name-col { width: 146px; border-right: 1px solid #8c8c8c; flex: none; }
.usage-col { flex: 1; }
.sort-mark { position: absolute; right: 8px; top: 4px; width: 16px; height: 16px; }
.grid-row { display: flex; height: 20px; border-bottom: 1px solid #a6a6a6; border-right: 2px solid #a6a6a6; line-height: 21px; }
.cell { padding-left: 2px; }
.cell.usage-col { padding-left: 4px; }

.tree-body { display: flex; overflow: hidden; }
.tree { flex: 1; overflow: hidden;
  background:
    repeating-linear-gradient(180deg, #9a9a9a 0 1px, transparent 1px 2px) 30px 0 / 1px 100% no-repeat,
    repeating-linear-gradient(180deg, #9a9a9a 0 1px, transparent 1px 2px) 50px 0 / 1px 100% no-repeat;
}
.tree-row { height: 20px; display: flex; align-items: center; gap: 6px; flex: none; }
.node-icon { width: 16px; height: 16px; flex: none; }
.lvl2 { padding-left: 62px; }
.lvl2x { padding-left: 46px; gap: 0; }
.lvl2x .node-icon { margin-left: 7px; margin-right: 6px; }
.lvl3 { padding-left: 82px; }
.stub { background: repeating-linear-gradient(90deg, #9a9a9a 0 1px, transparent 1px 2px) 51px 50% / 10px 1px no-repeat; }
.branch { background:
  repeating-linear-gradient(90deg, #9a9a9a 0 1px, transparent 1px 2px) 71px 50% / 10px 1px no-repeat,
  repeating-linear-gradient(180deg, #9a9a9a 0 1px, transparent 1px 2px) 70px 0 / 1px 100% no-repeat; }
.branch-end { background:
  repeating-linear-gradient(90deg, #9a9a9a 0 1px, transparent 1px 2px) 71px 50% / 10px 1px no-repeat,
  repeating-linear-gradient(180deg, #9a9a9a 0 1px, transparent 1px 2px) 70px 0 / 1px 50% no-repeat; }
.selected { background:
  repeating-linear-gradient(90deg, #9a9a9a 0 1px, transparent 1px 2px) 51px 50% / 8px 1px no-repeat,
  linear-gradient(#eeeeee, #eeeeee) 59px 0 / 100% 100% no-repeat; }
.expander { width: 9px; height: 9px; flex: none; border: 1px solid #9a9a9a; background: #fff; font: 9px/7px "Liberation Mono", monospace; text-align: center; color: #111; }

.scrollbar { width: 21px; flex: none; display: flex; flex-direction: column; margin: 1px 1px 0 0; }
.sb-btn { height: 20px; flex: none; background: #f0f0f0; border-right: 1px solid #777; border-bottom: 1px solid #777; border-top: 1px solid #fff; border-left: 1px solid #fff; display: flex; align-items: center; justify-content: center; }
.sb-arrow { width: 10px; height: 6px; }
.sb-track { flex: 1; background: #f6f6f6; padding-top: 42px; }
.sb-thumb { height: 40px; background: #f0f0f0; border-right: 1px solid #777; border-bottom: 1px solid #777; border-top: 1px solid #fff; border-left: 1px solid #fff; }

.debug-head { height: 29px; background: #f0f0f0; border-bottom: 2px solid #808080; border-right: 2px solid #808080; display: flex; align-items: center; padding: 3px 0 0 4px; }
.debug-list { padding-top: 1px; background: repeating-linear-gradient(180deg, #9a9a9a 0 1px, transparent 1px 2px) 9px 0 / 1px 130px no-repeat; }
.debug-row { height: 20px; display: flex; align-items: center; padding-left: 5px; background: repeating-linear-gradient(90deg, #9a9a9a 0 1px, transparent 1px 2px) 14px 50% / 8px 1px no-repeat; }
.debug-row.alt { background-color: #f7f7f7; }
.debug-row .expander { border-color: #bbb; }
.checkbox { width: 13px; height: 13px; border: 1.500px solid #222; background: #fff; margin: -2px 8px 0 9px; flex: none; display: block; }
.checkbox svg { width: 10px; height: 10px; display: block; }

.doc-head { height: 25px; display: flex; align-items: flex-start; font-size: 12px; flex: none; }
.doc-icon { width: 16px; height: 16px; margin: 1px 0 0 11px; flex: none; }
.doc-name { width: 156px; height: 17px; margin: 1px 0 0 19px; border: 1px solid #a9a9a9; border-top-color: #ddd; border-left-color: #ddd; text-align: center; line-height: 15px; }
.doc-check { width: 15px; height: 16px; margin: 1px 0 0 9px; background: #fff; border: 1px solid #9a9a9a; border-right-color: #eee; border-bottom-color: #eee; }
.doc-text { flex: 1; margin: 0 2px 0 1px; background: #fff; border-left: 2px solid #808080; border-top: 2px solid #808080; border-right: 1px solid #f6f6f6; border-bottom: 1px solid #f6f6f6; }
.doc-tabs { height: 25px; flex: none; display: flex; font-size: 12px; padding-left: 1px; }
.doc-tab { height: 22px; margin-top: 2px; border: 1px solid #707070; border-top: 1px solid #aaa; border-left: 1px solid #f8f8f8; display: flex; align-items: center; justify-content: center; background: #f0f0f0; }
.doc-tab.active { width: 113px; height: 24px; margin-top: 0; padding-top: 3px; border: none; border-bottom: 2px solid #777; border-top: 1px solid #fafafa; border-right: 1px solid #777; }
.w-hist { width: 131px; border-left: 2px solid #808080; }
.w-log { width: 48px; margin-left: 1px; }

.editor { flex: 1; min-width: 0; border-left: 2px solid #999; margin-left: 5px; padding-left: 2px; display: flex; flex-direction: column; }
.tabs { height: 28px; flex: none; display: flex; align-items: stretch; font-size: 12px; }
.new-tab { width: 18px; height: 18px; margin: 5px 3px 0 3px; flex: none; }
.tab { display: flex; align-items: center; padding: 2px 18px 0 15px; gap: 0; height: 27px; border-right: 2px solid #909090; }
.tab-first { padding-right: 17px; }
.tab span { margin: 0 6px 0 5px; white-space: nowrap; }
.tab-icon { width: 20px; height: 20px; flex: none; }
.tab-x { width: 14px; height: 14px; flex: none; }
.tab-before-active { border-right: none; border-top: 1px solid #fafafa; padding-right: 20px; }
.tab-active { border-left: 1px solid #fafafa; padding-left: 13px; }
.canvas { flex: 1; background: #fff; border-top: 2px solid #808080; border-left: 2px solid #808080; border-bottom: 2px solid #909090; border-right: 1px solid #ddd; min-height: 0; margin-right: 1px; }
.diagram { display: block; width: 1610px; height: 835px; }
.edges path { fill: none; stroke: #ff2020; stroke-width: 1.300; }
.start { fill: #ff0000; }
.states rect { fill: #ffff00; stroke: #ff3030; stroke-width: 1.500; }
.labels text { font: 16px "Liberation Sans", sans-serif; fill: #111; text-anchor: middle; }
.end-ring { fill: #fff; stroke: #f01020; stroke-width: 1.800; }

.statusbar { height: 35px; flex: none; display: flex; align-items: center; background: #f0f0f0; }
.status-label { width: 95px; height: 32px; line-height: 31px; font-size: 14px; padding-left: 2px; border: 1px solid #fafafa; border-left: none; white-space: nowrap; }
.status-right { margin-left: 825px; width: 1000px; height: 32px; border-left: 1px solid #999; display: flex; align-items: center; font-size: 14px; }
.zoom-pct { margin-left: 692px; width: 46px; }
.zoom-btns { width: 83px; height: 30px; display: flex; align-items: center; border: 1px solid #fafafa; border-right: 2px solid #8a8a8a; border-bottom: 2px solid #8a8a8a; background: #f0f0f0; }
.zb-fit { width: 31px; text-align: center; border-right: 1px solid #aaa; line-height: 18px; }
.zb-100 { flex: 1; text-align: center; padding-left: 2px; }
.zoom-box { width: 33px; height: 30px; margin-left: 5px; border: 1px solid #bbb; display: flex; align-items: center; justify-content: center; }
.zoom-last { margin-left: 3px; border-right: none; }
.zoom-glass { width: 20px; height: 20px; }
.zoom-slider { width: 103px; height: 30px; margin-left: 3px; border: 1px solid #bbb; position: relative; background: linear-gradient(#999, #999) 2px 13px / 97px 2px no-repeat; }
.slider-handle { position: absolute; left: 18px; top: 0; width: 13px; height: 28px; background: #f0f0f0; border-right: 2px solid #888; border-bottom: 2px solid #888; border-left: 1px solid #fff; }

.taskbar { height: 60px; flex: none; background: #1c1c1c; display: flex; align-items: center; padding-left: 26px; color: #fff; border-top: 1px solid #2b2b2b; }
.widgets { width: 30px; height: 28px; flex: none; }
.start-btn { width: 30px; height: 30px; margin-left: 528px; flex: none; }
.search-pill { width: 275px; height: 40px; margin-left: 17px; border-radius: 20px; background: #3a3a3a; border: 1px solid #4a4a4a; display: flex; align-items: center; padding-left: 15px; position: relative; flex: none; overflow: hidden; }
.search-glass { width: 18px; height: 20px; flex: none; }
.search-text { margin-left: 13px; font-size: 16px; color: #cfcfcf; }
.dolphin { position: absolute; right: 4px; bottom: 0; width: 62px; height: 38px; }
.task-slot { width: 55px; height: 50px; display: flex; align-items: center; justify-content: center; position: relative; flex: none; }
.first-slot { margin-left: 3px; margin-right: -1px; }
.task-view { width: 31px; height: 28px; }
.task-icon { width: 30px; height: 30px; }
.badge { position: absolute; right: 2px; top: 5px; width: 17px; height: 20px; }
.badge-text { font: bold 12px "Noto Sans", sans-serif; fill: #cfe6f8; text-anchor: middle; }
.dot { position: absolute; left: 24px; bottom: 1px; width: 8px; height: 4px; border-radius: 2px; background: #8d8d8d; }
.active-app { background: #2a2a2a; border-radius: 5px; width: 50px; margin-left: 3px; }
.app-win { width: 30px; height: 23px; }
.bar { position: absolute; left: 15px; bottom: 1px; width: 20px; height: 4px; border-radius: 2px; background: #4cc2ff; }
.tray { margin-left: auto; display: flex; align-items: center; height: 100%; padding-right: 14px; }
.tray-slot { flex: none; }
.chev { width: 26px; height: 12px; }
.tray-lang { width: 70px; display: flex; flex-direction: column; align-items: center; font-size: 14px; line-height: 20px; color: #f5f5f5; }
.wifi { width: 24px; height: 20px; }
.vol { width: 34px; height: 20px; }
.batt { width: 28px; height: 20px; }
.clock { width: 94px; display: flex; flex-direction: column; align-items: flex-end; font-size: 14px; line-height: 20px; color: #f5f5f5; white-space: nowrap; }
.bell { width: 38px; height: 24px; }
.copilot { width: 52px; height: 36px; position: relative; }
.copilot-mark { position: absolute; left: 11px; top: 2px; width: 29px; height: 24px; }
.pre-badge { position: absolute; left: 18px; top: 22px; width: 22px; height: 9px; border-radius: 2px; background: #f7b500; color: #111; font: bold 8px/9px "Noto Sans", sans-serif; text-align: center; }
```
